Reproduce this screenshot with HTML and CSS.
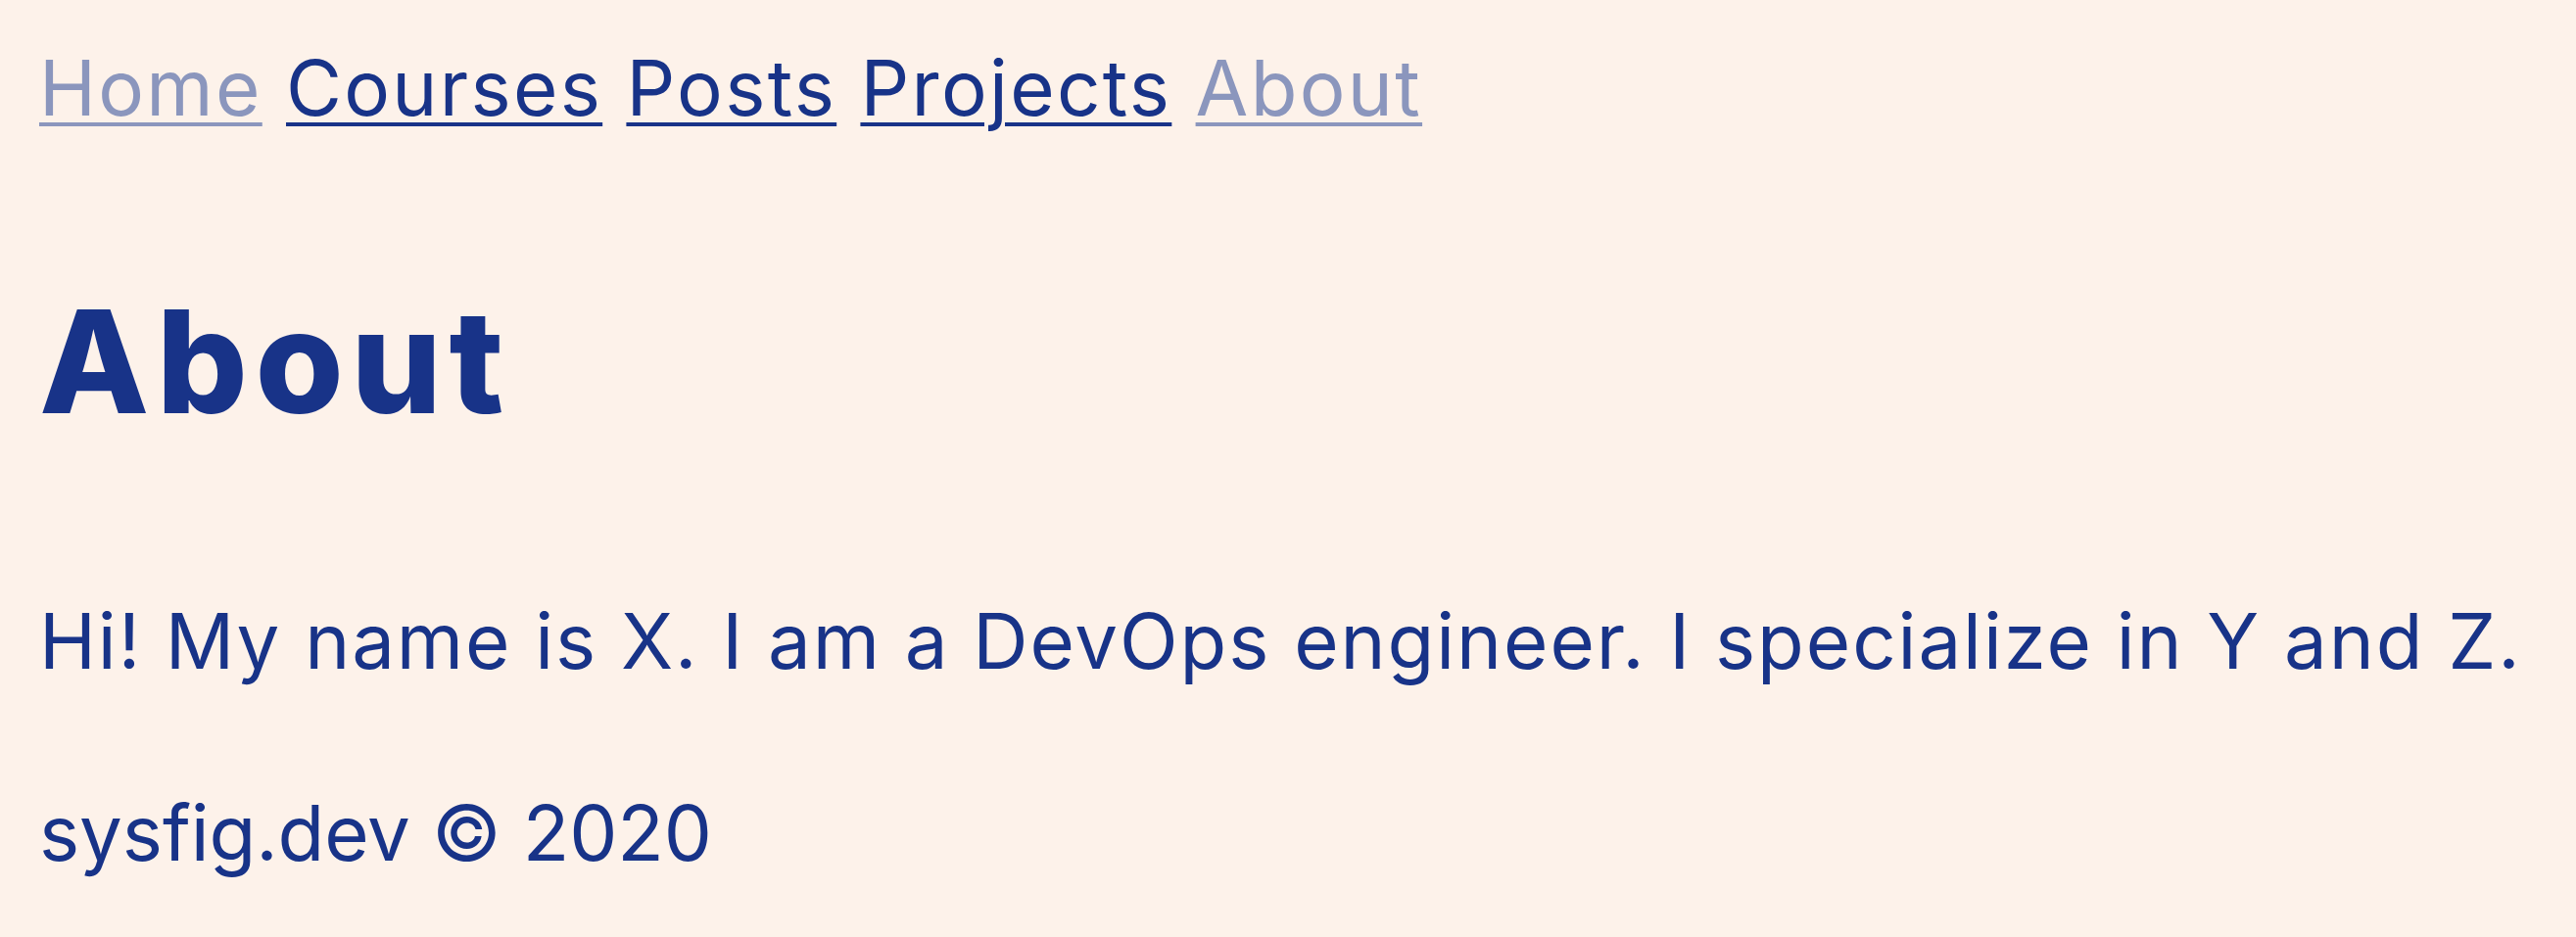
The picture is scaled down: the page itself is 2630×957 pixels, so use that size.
FILE: index.html
```html
<!DOCTYPE html>
<html lang="en">
<head>
<meta charset="utf-8">
<title>About | sysfig.dev</title>
<link rel="stylesheet" href="styles.css">
</head>
<body>
<div class="page">
  <nav class="nav">
    <a class="link faded" href="#">Home</a>
    <a class="link" href="#">Courses</a>
    <a class="link" href="#">Posts</a>
    <a class="link" href="#">Projects</a>
    <a class="link faded" href="#">About</a>
  </nav>
  <h1 class="title">About</h1>
  <p class="text">Hi! My name is X. I am a DevOps engineer. I specialize in Y and Z.</p>
  <footer class="footer">sysfig.dev © 2020</footer>
</div>
</body>
</html>
```
FILE: styles.css
```css
html, body {
  margin: 0;
  padding: 0;
  background: #fdf2ea;
}
body {
  color: #183388;
  font-family: "Inter", "Noto Sans", sans-serif;
}
.page {
  padding: 43px 40px 0 40px;
}
.nav {
  font-size: 78px;
  line-height: 1.2;
  letter-spacing: 2.3px;
  white-space: nowrap;
}
.link {
  color: #183388;
  text-decoration: underline;
  text-decoration-thickness: 4px;
  text-underline-offset: 7px;
}
.link.faded {
  color: #8b96bd;
}
.title {
  margin: 145px 0 0 0;
  font-size: 146px;
  line-height: 1.2;
  font-weight: 800;
  letter-spacing: 7.5px;
}
.text {
  margin: 151px 0 0 0;
  font-size: 78px;
  line-height: 1.2;
  letter-spacing: 1.9px;
  white-space: nowrap;
}
.footer {
  margin-top: 103px;
  font-size: 78px;
  line-height: 1.2;
  letter-spacing: -0.1px;
}
```
